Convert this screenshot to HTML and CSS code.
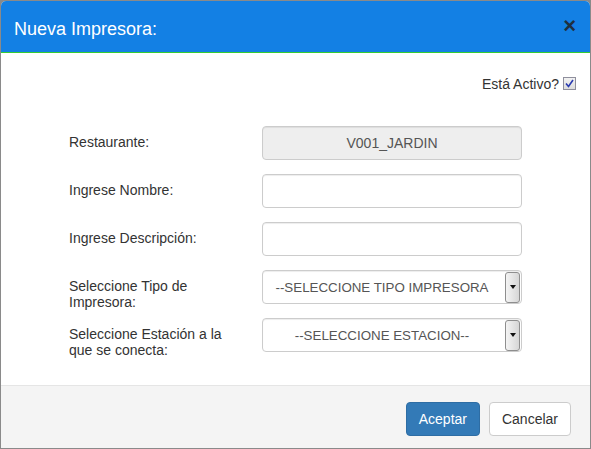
FILE: index.html
```html
<!DOCTYPE html>
<html lang="es">
<head>
<meta charset="utf-8">
<title>Nueva Impresora</title>
<link rel="stylesheet" href="styles.css">
</head>
<body>
<div class="modal">
  <div class="modal-header">
    <h4 class="modal-title">Nueva Impresora:</h4>
    <span class="close">&times;</span>
  </div>
  <div class="modal-body">
    <div class="active-row">
      <label class="active-label">Está Activo?</label>
      <span class="checkbox">
        <svg width="9" height="9" viewBox="0 0 9 9"><path d="M1 4.5 L3.5 7.5 L8 1" fill="none" stroke="#2a3bb0" stroke-width="1.6"/></svg>
      </span>
    </div>
    <div class="form">
      <div class="row">
        <label class="lbl">Restaurante:</label>
        <div class="control readonly">V001_JARDIN</div>
      </div>
      <div class="row">
        <label class="lbl">Ingrese Nombre:</label>
        <div class="control"></div>
      </div>
      <div class="row">
        <label class="lbl">Ingrese Descripción:</label>
        <div class="control"></div>
      </div>
      <div class="row">
        <label class="lbl">Seleccione Tipo de<br>Impresora:</label>
        <div class="control select">
          <span class="sel-text">--SELECCIONE TIPO IMPRESORA</span>
          <span class="sel-btn"><span class="tri"></span></span>
        </div>
      </div>
      <div class="row">
        <label class="lbl">Seleccione Estación a la<br>que se conecta:</label>
        <div class="control select">
          <span class="sel-text">--SELECCIONE ESTACION--</span>
          <span class="sel-btn"><span class="tri"></span></span>
        </div>
      </div>
    </div>
  </div>
  <div class="modal-footer">
    <button class="btn btn-primary">Aceptar</button>
    <button class="btn btn-default">Cancelar</button>
  </div>
</div>
</body>
</html>
```
FILE: styles.css
```css
html, body {
  margin: 0;
  padding: 0;
}
body {
  background: #8a8a8a;
  font-family: "Liberation Sans", Arial, sans-serif;
  font-size: 14px;
  color: #333;
  width: 591px;
  height: 449px;
  overflow: hidden;
}
.modal {
  margin: 1px 1px 0 1px;
  width: 589px;
  height: 447px;
  background: #fff;
  border-radius: 5px 5px 0 0;
  display: flex;
  flex-direction: column;
  overflow: hidden;
}
.modal-header {
  background: #1380e4;
  height: 51px;
  border-bottom: 1px solid #33cc33;
  display: flex;
  align-items: center;
  justify-content: space-between;
  padding: 0 14px 0 13px;
  box-sizing: content-box;
}
.modal-title {
  margin: 0;
  padding-top: 6px;
  font-size: 18px;
  font-weight: normal;
  color: #fff;
}
.close {
  color: #222;
  font-size: 22px;
  font-weight: bold;
  line-height: 1;
  opacity: 0.85;
  margin-top: -2px;
}
.modal-body {
  flex: 1;
  padding: 23px 14px 0 68px;
}
.active-row {
  display: flex;
  justify-content: flex-end;
  align-items: center;
  gap: 4px;
  height: 16px;
}
.active-label {
  font-size: 14px;
}
.checkbox {
  width: 11px;
  height: 11px;
  border: 1px solid #8f8f9d;
  background: linear-gradient(#f2f2f2, #dcdcdc);
  display: flex;
  align-items: center;
  justify-content: center;
  margin-top: -2px;
}
.form {
  margin-top: 34px;
  display: flex;
  flex-direction: column;
  gap: 14px;
}
.row {
  display: flex;
  align-items: flex-start;
  height: 34px;
}
.lbl {
  width: 193px;
  line-height: 16px;
  padding-top: 8px;
}
.control {
  width: 260px;
  height: 34px;
  box-sizing: border-box;
  border: 1px solid #ccc;
  border-radius: 4px;
  background: #fff;
  box-shadow: inset 0 1px 1px rgba(0,0,0,0.075);
}
.readonly {
  background: #eee;
  color: #555;
  display: flex;
  align-items: center;
  justify-content: center;
}
.select {
  display: flex;
  align-items: center;
  padding: 1px 1px 1px 0;
  color: #555;
  font-size: 13.33px;
}
.sel-text {
  flex: 1;
  text-align: center;
  white-space: nowrap;
  overflow: hidden;
}
.sel-btn {
  width: 15px;
  height: 31px;
  box-sizing: border-box;
  border: 1px solid #8e8e8e;
  border-radius: 3px;
  background: linear-gradient(to right, #f4f4f4, #d6d6d6);
  display: flex;
  align-items: center;
  justify-content: center;
  margin-left: 4px;
}
.tri {
  width: 0;
  height: 0;
  border-left: 3.5px solid transparent;
  border-right: 3.5px solid transparent;
  border-top: 4px solid #111;
}
.modal-footer {
  border-top: 1px solid #e5e5e5;
  background: #f4f4f4;
  height: 63px;
  display: flex;
  justify-content: flex-end;
  align-items: flex-start;
  padding: 16px 19px 0 0;
  gap: 9px;
  box-sizing: border-box;
}
.btn {
  height: 34px;
  padding: 0 12px;
  font-family: "Liberation Sans", Arial, sans-serif;
  font-size: 14px;
  border-radius: 4px;
  border: 1px solid transparent;
  cursor: pointer;
}
.btn-primary {
  background: #337ab7;
  border-color: #2e6da4;
  color: #fff;
}
.btn-default {
  background: #fff;
  border-color: #ccc;
  color: #333;
}
```
